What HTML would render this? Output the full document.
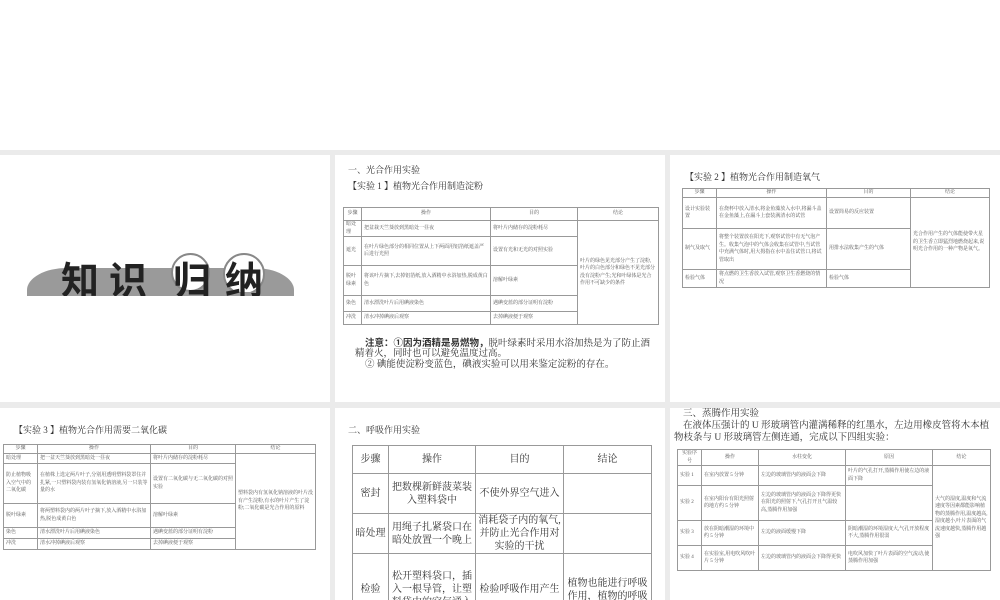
<!DOCTYPE html>
<html><head><meta charset="utf-8"><style>
*{margin:0;padding:0;box-sizing:border-box}
html{overflow:hidden;width:1000px;height:600px}
body{width:1000px;height:600px;background:#fff;position:relative;overflow:hidden;font-family:"Liberation Serif","Noto Serif CJK SC",serif;color:#333}
.bg{position:absolute;left:0;top:150px;width:1000px;height:450px;background:#ebebeb}
.s{position:absolute;background:#fff;overflow:hidden}
.a{position:absolute;white-space:nowrap}
table{position:absolute;border-collapse:collapse;table-layout:fixed;border:1.5px solid #444}
td{border:1px solid #999;font-size:5px;line-height:7.5px;padding:0 2px;color:#555;vertical-align:middle;overflow:hidden}
tr.h td{text-align:center}
.big td{font-size:10px;line-height:13px;color:#333;text-align:center;padding:0 1px}
.ch{position:absolute;top:100px;font:bold 38px/46px 'Noto Sans CJK SC',sans-serif;color:#222;height:41px;overflow:hidden}
</style></head><body>
<div class="bg"></div>

<!-- slide 1 -->
<div class="s" style="left:0;top:155px;width:330px;height:247px">
  <div style="position:absolute;left:27px;top:113px;width:267px;height:28px;background:#9a9a9a;border-radius:40px 40px 0 0/22px 22px 0 0"></div>
  <div style="position:absolute;left:171px;top:98px;width:39px;height:39px;border-radius:50%;background:#fff;border:2px solid #888"></div>
  <div style="position:absolute;left:223px;top:98px;width:42px;height:42px;border-radius:50%;background:#fff;border:2px solid #888"></div>
  <div style="position:absolute;left:150px;top:137px;width:130px;height:4px;background:#9a9a9a"></div>
  <div class="ch" style="left:61px">知</div>
  <div class="ch" style="left:109px">识</div>
  <div class="ch" style="left:173px">归</div>
  <div class="ch" style="left:225px">纳</div>
</div>

<!-- slide 2 -->
<div class="s" style="left:335px;top:155px;width:330px;height:247px">
  <div class="a" style="left:13px;top:8px;font-size:9px">一、光合作用实验</div>
  <div class="a" style="left:13px;top:24px;font-size:9px">【实验 1 】植物光合作用制造淀粉</div>
  <table style="left:8px;top:52px;width:316px;height:115px">
    <colgroup><col style="width:18px"><col style="width:129px"><col style="width:87px"><col></colgroup>
    <tr class="h" style="height:13px"><td>步骤</td><td>操作</td><td>目的</td><td>结论</td></tr>
    <tr style="height:13px"><td>暗处理</td><td>把盆栽天竺葵放到黑暗处一昼夜</td><td>将叶片内储存的淀粉耗尽</td><td rowspan="5">叶片的绿色见光部分产生了淀粉,叶片的白色部分和绿色不见光部分没有淀粉产生;光和叶绿体是光合作用不可缺少的条件</td></tr>
    <tr style="height:29px"><td>遮光</td><td>在叶片绿色部分的相同位置从上下两面用铝箔纸遮盖严后进行光照</td><td>设置有光和无光的对照实验</td></tr>
    <tr style="height:30px"><td>脱叶绿素</td><td>将该叶片摘下,去掉铝箔纸,放入酒精中水浴加热,脱成黄白色</td><td>溶解叶绿素</td></tr>
    <tr style="height:16px"><td>染色</td><td>清水漂洗叶片后用碘液染色</td><td>遇碘变蓝的部分证明有淀粉</td></tr>
    <tr style="height:13px"><td>冲洗</td><td>清水冲掉碘液后观察</td><td>去掉碘液便于观察</td></tr>
  </table>
  <div class="a" style="left:30px;top:181px;font-size:9.5px;line-height:12px"><b style="font-family:'Noto Sans CJK SC',sans-serif">注意：①因为酒精是易燃物，</b>脱叶绿素时采用水浴加热是为了防止酒</div>
  <div class="a" style="left:20px;top:193px;font-size:9.5px;line-height:12px">精着火，同时也可以避免温度过高。</div>
  <div class="a" style="left:30px;top:204px;font-size:9.5px;line-height:12px">② 碘能使淀粉变蓝色，碘液实验可以用来鉴定淀粉的存在。</div>
</div>

<!-- slide 3 -->
<div class="s" style="left:670px;top:155px;width:330px;height:247px">
  <div class="a" style="left:15px;top:15px;font-size:9px">【实验 2 】植物光合作用制造氧气</div>
  <table style="left:12px;top:33px;width:308px;height:99px">
    <colgroup><col style="width:34px"><col style="width:110px"><col style="width:84px"><col></colgroup>
    <tr class="h" style="height:9px"><td>步骤</td><td>操作</td><td>目的</td><td>结论</td></tr>
    <tr style="height:31px"><td>设计实验装置</td><td>在烧杯中放入清水,将金鱼藻放入水中,将漏斗盖在金鱼藻上,在漏斗上套装满清水的试管</td><td>设置简易的反应装置</td><td rowspan="3">光合作用产生的气体能使带火星的卫生香立即猛烈地燃烧起来,说明光合作用的一种产物是氧气。</td></tr>
    <tr style="height:41px"><td>制气及取气</td><td>将整个装置放在阳光下,观察试管中有无气泡产生。收集气泡中的气体会收集在试管中,当试管中充满气体时,用大拇指在水中盖住试管口,将试管取出</td><td>用排水法收集产生的气体</td></tr>
    <tr style="height:18px"><td>检验气体</td><td>将点燃的卫生香放入试管,观察卫生香燃烧的情况</td><td>检验气体</td></tr>
  </table>
</div>

<!-- slide 4 -->
<div class="s" style="left:0;top:408px;width:330px;height:192px">
  <div class="a" style="left:14px;top:15px;font-size:9px">【实验 3 】植物光合作用需要二氧化碳</div>
  <table style="left:3px;top:36px;width:313px;height:105px">
    <colgroup><col style="width:34px"><col style="width:113px"><col style="width:85px"><col></colgroup>
    <tr class="h" style="height:9px"><td>步骤</td><td>操作</td><td>目的</td><td>结论</td></tr>
    <tr style="height:10px"><td>暗处理</td><td>把一盆天竺葵放到黑暗处一昼夜</td><td>将叶片内储存的淀粉耗尽</td><td rowspan="5">塑料袋内有氢氧化钠溶液的叶片没有产生淀粉,有水的叶片产生了淀粉;二氧化碳是光合作用的原料</td></tr>
    <tr style="height:40px"><td>防止植物吸入空气中的二氧化碳</td><td>在植株上选定两片叶子,分别用透明塑料袋罩住并扎紧,一只塑料袋内装有氢氧化钠溶液,另一只装等量的水</td><td>设置有二氧化碳与无二氧化碳的对照实验</td></tr>
    <tr style="height:24px"><td>脱叶绿素</td><td>将两塑料袋内的两片叶子摘下,放入酒精中水浴加热,脱色成黄白色</td><td>溶解叶绿素</td></tr>
    <tr style="height:11px"><td>染色</td><td>清水漂洗叶片后用碘液染色</td><td>遇碘变蓝的部分证明有淀粉</td></tr>
    <tr style="height:11px"><td>冲洗</td><td>清水冲掉碘液后观察</td><td>去掉碘液便于观察</td></tr>
  </table>
</div>

<!-- slide 5 -->
<div class="s" style="left:335px;top:408px;width:330px;height:192px">
  <div class="a" style="left:13px;top:15px;font-size:9px">二、呼吸作用实验</div>
  <table class="big" style="left:17px;top:37px;width:300px;height:180px">
    <colgroup><col style="width:36px"><col style="width:87px"><col style="width:88px"><col></colgroup>
    <tr style="height:28px"><td>步骤</td><td>操作</td><td>目的</td><td>结论</td></tr>
    <tr style="height:40px"><td>密封</td><td>把数棵新鲜菠菜装入塑料袋中</td><td>不使外界空气进入</td><td></td></tr>
    <tr style="height:40px"><td>暗处理</td><td>用绳子扎紧袋口在暗处放置一个晚上</td><td>消耗袋子内的氧气,并防止光合作用对实验的干扰</td><td></td></tr>
    <tr style="height:72px"><td>检验</td><td>松开塑料袋口，插入一根导管，让塑料袋中的空气通入</td><td>检验呼吸作用产生</td><td>植物也能进行呼吸作用，植物的呼吸</td></tr>
  </table>
</div>

<!-- slide 6 -->
<div class="s" style="left:670px;top:408px;width:330px;height:192px">
  <div class="a" style="left:13px;top:1px;font-size:9.5px;line-height:11px">三、蒸腾作用实验</div>
  <div class="a" style="left:13px;top:12px;font-size:9.5px;line-height:12px">在液体压强计的 U 形玻璃管内灌满稀释的红墨水，左边用橡皮管将木本植</div>
  <div class="a" style="left:4px;top:24px;font-size:9.5px;line-height:12px">物枝条与 U 形玻璃管左侧连通，完成以下四组实验：</div>
  <table style="left:7px;top:41px;width:314px;height:116px">
    <colgroup><col style="width:24px"><col style="width:57px"><col style="width:87px"><col style="width:87px"><col></colgroup>
    <tr class="h" style="height:11px"><td>实验序号</td><td>操作</td><td>水柱变化</td><td>原因</td><td>结论</td></tr>
    <tr style="height:20px"><td>实验 1</td><td>在室内放置 5 分钟</td><td>左边的玻璃管内的液面会下降</td><td>叶片的气孔打开,蒸腾作用使左边的液面下降</td><td rowspan="4">大气的湿度,温度和气流速度等因素都能影响植物的蒸腾作用,温度越高,湿度越小,叶片表面的气流速度越快,蒸腾作用越强</td></tr>
    <tr style="height:35px"><td>实验 2</td><td>在室内阳台有阳光照射的地方约 5 分钟</td><td>左边的玻璃管内的液面会下降得更快在阳光的照射下,气孔打开且气温较高,蒸腾作用加强</td><td></td></tr>
    <tr style="height:25px"><td>实验 3</td><td>放在阴暗潮湿的环境中约 5 分钟</td><td>左边的液面缓慢下降</td><td>阴暗潮湿的环境湿度大,气孔开放程度不大,蒸腾作用很弱</td></tr>
    <tr style="height:25px"><td>实验 4</td><td>在实验室,用电吹风吹叶片 5 分钟</td><td>左边的玻璃管内的液面会下降得更快</td><td>电吹风加快了叶片表面的空气流动,使蒸腾作用加强</td></tr>
  </table>
</div>
</body></html>
